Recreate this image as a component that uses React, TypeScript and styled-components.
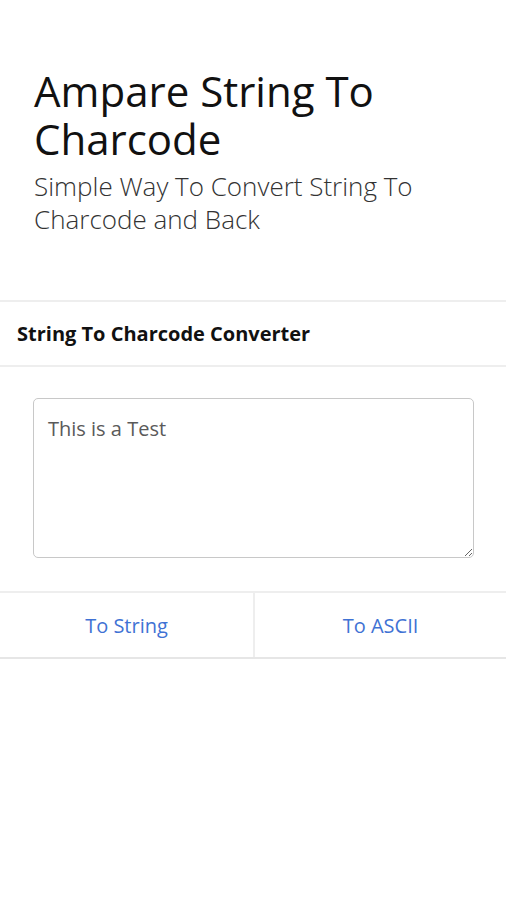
import styled, { createGlobalStyle } from "styled-components";

const GlobalStyle = createGlobalStyle`
  html, body {
    margin: 0;
    padding: 0;
    background: #ffffff;
    font-family: "Open Sans", "Noto Sans", sans-serif;
  }
`;

const Page = styled.div`
  width: 100%;
  min-height: 900px;
  background: #ffffff;
`;

const Hero = styled.header`
  padding: 67px 34px 0;
  height: 300px;
  box-sizing: border-box;
`;

const Title = styled.h1`
  margin: 0;
  font-size: 42px;
  line-height: 48px;
  font-weight: 400;
  color: #111111;
`;

const Subtitle = styled.p`
  margin: 7px 0 0;
  font-size: 26px;
  line-height: 33px;
  font-weight: 300;
  color: #333333;
`;

const Card = styled.section`
  border-top: 2px solid #eeeeee;
`;

const CardHeader = styled.div`
  height: 63px;
  display: flex;
  align-items: center;
  padding: 0 17px;
  border-bottom: 2px solid #eeeeee;
  font-size: 20px;
  font-weight: 700;
  color: #111111;
`;

const CardBody = styled.div`
  padding: 31px 32px 33px 33px;
`;

const Input = styled.textarea`
  display: block;
  width: 100%;
  height: 160px;
  box-sizing: border-box;
  padding: 16px 14px 13px;
  border: 1px solid #c8c8c8;
  border-radius: 5px;
  font-family: inherit;
  font-size: 20px;
  line-height: 28px;
  color: #5a5a5a;
  resize: vertical;
  outline: none;
`;

const Actions = styled.div`
  display: grid;
  grid-template-columns: 1fr 1fr;
  border-top: 2px solid #eeeeee;
  border-bottom: 2px solid #e6e6e6;
`;

const ActionButton = styled.button<{ $divider?: boolean }>`
  height: 64px;
  border: none;
  border-left: ${(p) => (p.$divider ? "2px solid #eeeeee" : "none")};
  background: #ffffff;
  font-family: inherit;
  font-size: 20px;
  font-weight: 400;
  color: #3f72d4;
  cursor: pointer;
`;

export default function App() {
  return (
    <Page>
      <GlobalStyle />
      <Hero>
        <Title>Ampare String To Charcode</Title>
        <Subtitle>Simple Way To Convert String To Charcode and Back</Subtitle>
      </Hero>
      <Card>
        <CardHeader>String To Charcode Converter</CardHeader>
        <CardBody>
          <Input defaultValue="This is a Test" />
        </CardBody>
        <Actions>
          <ActionButton>To String</ActionButton>
          <ActionButton $divider>To ASCII</ActionButton>
        </Actions>
      </Card>
    </Page>
  );
}
